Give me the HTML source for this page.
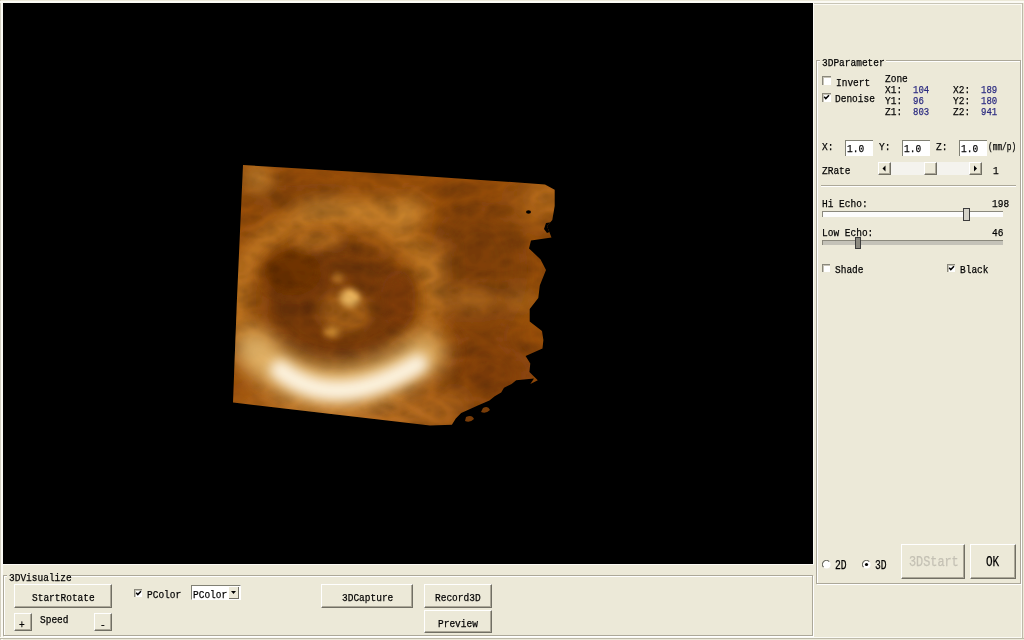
<!DOCTYPE html>
<html><head><meta charset="utf-8"><style>
html,body{margin:0;padding:0;width:1024px;height:640px;overflow:hidden;background:#ece9d8;position:relative}
.t{position:absolute;-webkit-text-stroke:0.25px currentColor;font-family:"Liberation Mono",monospace;font-size:11.5px;line-height:13px;white-space:pre;color:#000;transform:scaleX(0.826);transform-origin:0 0}
#view{position:absolute;left:3px;top:3px;width:810px;height:561px;background:#000}
.btn{position:absolute;box-sizing:border-box;background:#ece9d8;border-top:1px solid #fff;border-left:1px solid #fff;border-right:1px solid #716f64;border-bottom:1px solid #716f64;box-shadow:inset -1px -1px 0 #aca899}
.gb{position:absolute;border-top:1px solid #aca899;border-left:1px solid #aca899;border-right:1px solid #fff;border-bottom:1px solid #fff;box-shadow:inset 1px 1px 0 #fff, 1px 1px 0 #aca899}
.lbl{position:absolute;background:#ece9d8}
.cb{position:absolute;background:#fff;border-top:1px solid #808080;border-left:1px solid #808080;box-sizing:content-box;width:8px;height:8px}
.edit{position:absolute;background:#fff;border-top:1px solid #808074;border-left:1px solid #808074;}
.combo{position:absolute;background:#fff;border-top:1px solid #808074;border-left:1px solid #808074;border-right:1px solid #fff;border-bottom:1px solid #fff}
.cbtn{position:absolute;background:#ece9d8;border-right:1px solid #716f64;border-bottom:1px solid #716f64;box-sizing:content-box}
.track{position:absolute;background:#f4f3ee}
.thumb{position:absolute;border:1px solid #3c3c3c}
</style></head><body>
<div id="view"></div>
<svg id="vol" width="1024" height="640" style="position:absolute;left:0;top:0"><defs>
<clipPath id="vc"><path d="M243 165 L400 174.5 L545 184.4 L554.7 189.8 L554.7 206 L552.3 220 L547 226 L551.5 237.5 L531 240.6 L529 248.4 L540.6 259.4 L546 270 L539.8 285.6 L538.3 298 L529.7 309 L529.7 321.6 L542 331 L543.4 340 L542.5 348.4 L525.6 356 L530.3 363.4 L529.4 371.9 L535 377.5 L537.8 380.3 L530.3 384 L534 378.4 L516.2 380.3 L511.6 384 L504 387.8 L501.2 392.5 L494.7 396.2 L489.4 400.6 L478.4 405.3 L461.2 413.1 L455.8 418.6 L451.9 424.8 L430 425.6 L233 402.5 L236.9 300 Z"/></clipPath>
<filter id="b3" x="150" y="100" width="500" height="400" filterUnits="userSpaceOnUse"><feGaussianBlur stdDeviation="3"/></filter>
<filter id="b6" x="150" y="100" width="500" height="400" filterUnits="userSpaceOnUse"><feGaussianBlur stdDeviation="6"/></filter>
<filter id="b10" x="150" y="100" width="500" height="400" filterUnits="userSpaceOnUse"><feGaussianBlur stdDeviation="10"/></filter>
<filter id="b16" x="150" y="100" width="500" height="400" filterUnits="userSpaceOnUse"><feGaussianBlur stdDeviation="16"/></filter>
<filter id="tex" x="220" y="150" width="350" height="290" filterUnits="userSpaceOnUse"><feTurbulence type="turbulence" baseFrequency="0.03 0.05" numOctaves="4" seed="9" result="n"/><feColorMatrix in="n" type="matrix" values="-1.4 0 0 0 1.15  -1.4 0 0 0 1.15  -1.4 0 0 0 1.15  0 0 0 0 1" result="g"/><feGaussianBlur in="g" stdDeviation="1.2" result="g2"/><feComposite in="SourceGraphic" in2="g2" operator="arithmetic" k1="0.5" k2="0.62" k3="0" k4="0"/><feColorMatrix type="matrix" values="0.96 0 0 0 0  0 0.84 0 0 0  0 0 0.6 0 0  0 0 0 1 0"/></filter>
</defs>
<g clip-path="url(#vc)">
<g filter="url(#tex)">
<rect x="220" y="150" width="350" height="290" fill="rgb(150,82,14)"/>
<g filter="url(#b16)">
  <ellipse cx="478" cy="270" rx="50" ry="70" fill="rgb(125,66,8)"/>
  <ellipse cx="490" cy="375" rx="45" ry="30" fill="rgb(125,64,8)"/>
  <ellipse cx="545" cy="198" rx="18" ry="18" fill="rgb(205,140,55)"/>
  <ellipse cx="350" cy="412" rx="120" ry="16" fill="rgb(195,130,55)"/>
</g>
<g filter="url(#b10)">
  <ellipse cx="335" cy="300" rx="98" ry="85" stroke="rgb(195,132,50)" stroke-width="18" fill="none"/>
  <ellipse cx="295" cy="195" rx="45" ry="10" fill="rgb(122,64,8)"/>
  <ellipse cx="256" cy="176" rx="12" ry="10" fill="rgb(220,165,80)"/>
  <ellipse cx="338" cy="305" rx="74" ry="60" fill="rgb(118,60,8)"/>
  <ellipse cx="472" cy="300" rx="28" ry="9" fill="rgb(185,122,45)"/>
  <ellipse cx="410" cy="212" rx="16" ry="14" fill="rgb(205,145,60)"/>
  <path d="M300 214 Q370 198 420 215" stroke="rgb(210,155,70)" stroke-width="9" fill="none"/>
  <path d="M436 240 Q445 290 425 345" stroke="rgb(185,122,45)" stroke-width="12" fill="none"/>
  <ellipse cx="520" cy="300" rx="14" ry="10" fill="rgb(185,122,45)"/>
</g>
<g filter="url(#b6)">
  <ellipse cx="292" cy="272" rx="30" ry="24" fill="rgb(108,54,5)"/>
  <path d="M278 345 Q335 385 410 348" stroke="rgb(105,52,5)" stroke-width="14" fill="none"/>
  <ellipse cx="398" cy="300" rx="18" ry="30" fill="rgb(122,62,8)"/>
  <ellipse cx="345" cy="312" rx="26" ry="22" fill="rgb(160,98,30)"/>
  <ellipse cx="318" cy="240" rx="26" ry="9" fill="rgb(175,112,38)"/>
</g>
<g filter="url(#b3)">
  <ellipse cx="350" cy="298" rx="10" ry="9" fill="rgb(232,190,115)"/>
  <ellipse cx="332" cy="332" rx="8" ry="5" fill="rgb(205,148,65)"/>
  <ellipse cx="338" cy="278" rx="6" ry="5" fill="rgb(185,125,50)"/>
</g>
</g>
<g filter="url(#b10)" opacity="0.9">
  <path d="M255 350 Q325 420 426 354" stroke="rgb(230,185,110)" stroke-width="40" fill="none" stroke-linecap="round"/>
</g>
<g filter="url(#b6)" opacity="0.9">
  <path d="M280 370 Q335 414 418 364" stroke="rgb(255,250,238)" stroke-width="20" fill="none" stroke-linecap="round"/>
</g>
<ellipse cx="528.5" cy="212" rx="2.5" ry="1.8" fill="#000"/>
<path d="M546 223 L553 222 L552 231 L547 233 L544 229 Z" fill="#000"/>
</g>
<path d="M483 408 Q488 405 490 410 Q486 414 481 412 Z" fill="rgb(120,60,8)"/><path d="M466 417 Q472 414 474 419 Q470 423 465 421 Z" fill="rgb(120,60,8)"/>
</svg>
<div style="position:absolute;left:0px;top:0px;width:1px;height:640px;background:#d4d0c0"></div>
<div style="position:absolute;left:1px;top:1px;width:2px;height:639px;background:#fbfaf4"></div>
<div style="position:absolute;left:0px;top:1px;width:1024px;height:2px;background:#fbfaf4"></div>
<div style="position:absolute;left:814px;top:3px;width:209px;height:1px;background:#c8c5b6"></div>
<div style="position:absolute;left:814px;top:4px;width:208px;height:1px;background:#fbfaf4"></div>
<div style="position:absolute;left:813px;top:3px;width:1px;height:562px;background:#fbfaf4"></div>
<div style="position:absolute;left:3px;top:564px;width:811px;height:1px;background:#fbfaf4"></div>
<div style="position:absolute;left:1022px;top:3px;width:1px;height:636px;background:#bdbaa9"></div>
<div style="position:absolute;left:1021px;top:4px;width:1px;height:634px;background:#fbfaf4"></div>
<div style="position:absolute;left:0px;top:638px;width:1024px;height:1px;background:#bdbaa9"></div>
<div style="position:absolute;left:0px;top:637px;width:1022px;height:1px;background:#fbfaf4"></div>
<div style="position:absolute;left:4px;top:576px;width:808px;height:59px;border:1px solid #fff"></div>
<div style="position:absolute;left:3px;top:575px;width:808px;height:59px;border:1px solid #aca899"></div>
<div class="lbl" style="left:7px;top:570px;width:64px;height:10px"></div>
<div class="t" style="left:8.5px;top:570.54px;">3DVisualize</div>
<div class="btn" style="left:14px;top:584px;width:98px;height:24px"></div>
<div class="t" style="left:31.5px;top:591.14px;">StartRotate</div>
<div class="btn" style="left:14px;top:613px;width:18px;height:18px"></div>
<div class="t" style="left:19.0px;top:617.94px;">+</div>
<div class="btn" style="left:94px;top:613px;width:18px;height:18px"></div>
<div class="t" style="left:99.5px;top:617.94px;">-</div>
<div class="t" style="left:39.5px;top:613.14px;">Speed</div>
<svg style="position:absolute;left:134px;top:589px" width="8" height="8"><rect x="0" y="0" width="8" height="8" fill="#fff"/><rect x="0" y="0" width="8" height="1" fill="#8a887c"/><rect x="0" y="0" width="1" height="8" fill="#8a887c"/><rect x="1" y="1" width="7" height="1" fill="#c8c5b8"/><rect x="1" y="1" width="1" height="7" fill="#c8c5b8"/><path d="M2.2 3.8 L3.8 5.6 L7 2.2" stroke="#000" stroke-width="1.5" fill="none"/></svg>
<div class="t" style="left:146.5px;top:588.44px;">PColor</div>
<div class="combo" style="left:191px;top:585px;width:48px;height:13px"></div>
<div class="t" style="left:192.5px;top:588.24px;">PColor</div>
<div class="cbtn" style="left:229px;top:587px;width:9px;height:11px"><svg width="9" height="11" style="position:absolute;left:0;top:0"><path d="M2 4 L7 4 L4.5 7 Z" fill="#000"/></svg></div>
<div class="btn" style="left:321px;top:584px;width:92px;height:24px"></div>
<div class="t" style="left:341.5px;top:591.14px;">3DCapture</div>
<div class="btn" style="left:424px;top:584px;width:68px;height:24px"></div>
<div class="t" style="left:435.0px;top:591.14px;">Record3D</div>
<div class="btn" style="left:424px;top:610px;width:68px;height:23px"></div>
<div class="t" style="left:438.0px;top:616.94px;">Preview</div>
<div style="position:absolute;left:817px;top:61px;width:203px;height:522px;border:1px solid #fff"></div>
<div style="position:absolute;left:816px;top:60px;width:203px;height:522px;border:1px solid #aca899"></div>
<div class="lbl" style="left:820px;top:55px;width:66px;height:10px"></div>
<div class="t" style="left:821.5px;top:55.94px;">3DParameter</div>
<svg style="position:absolute;left:822px;top:76px" width="9" height="9"><rect x="0" y="0" width="9" height="9" fill="#fff"/><rect x="0" y="0" width="9" height="1" fill="#8a887c"/><rect x="0" y="0" width="1" height="9" fill="#8a887c"/><rect x="1" y="1" width="8" height="1" fill="#c8c5b8"/><rect x="1" y="1" width="1" height="8" fill="#c8c5b8"/></svg>
<div class="t" style="left:835.5px;top:75.54px;">Invert</div>
<svg style="position:absolute;left:822px;top:93px" width="9" height="9"><rect x="0" y="0" width="9" height="9" fill="#fff"/><rect x="0" y="0" width="9" height="1" fill="#8a887c"/><rect x="0" y="0" width="1" height="9" fill="#8a887c"/><rect x="1" y="1" width="8" height="1" fill="#c8c5b8"/><rect x="1" y="1" width="1" height="8" fill="#c8c5b8"/><path d="M2.2 3.8 L3.8 5.6 L7 2.2" stroke="#000" stroke-width="1.5" fill="none"/></svg>
<div class="t" style="left:835.0px;top:92.24px;">Denoise</div>
<div class="t" style="left:884.5px;top:72.44px;">Zone</div>
<div class="t" style="left:884.5px;top:82.54px;">X1:</div>
<div class="t" style="left:912.5px;top:82.54px;transform:scaleX(0.783);color:#2a2a80;">104</div>
<div class="t" style="left:952.5px;top:82.54px;">X2:</div>
<div class="t" style="left:980.7px;top:82.54px;transform:scaleX(0.783);color:#2a2a80;">189</div>
<div class="t" style="left:884.5px;top:94.04px;">Y1:</div>
<div class="t" style="left:912.5px;top:94.04px;transform:scaleX(0.783);color:#2a2a80;">96</div>
<div class="t" style="left:952.5px;top:94.04px;">Y2:</div>
<div class="t" style="left:980.7px;top:94.04px;transform:scaleX(0.783);color:#2a2a80;">180</div>
<div class="t" style="left:884.5px;top:105.44px;">Z1:</div>
<div class="t" style="left:912.5px;top:105.44px;transform:scaleX(0.783);color:#2a2a80;">803</div>
<div class="t" style="left:952.5px;top:105.44px;">Z2:</div>
<div class="t" style="left:980.7px;top:105.44px;transform:scaleX(0.783);color:#2a2a80;">941</div>
<div class="t" style="left:821.5px;top:139.64px;">X:</div>
<div class="t" style="left:878.5px;top:139.64px;">Y:</div>
<div class="t" style="left:935.5px;top:139.64px;">Z:</div>
<div class="edit" style="left:845px;top:140px;width:27px;height:15px"></div>
<div class="t" style="left:846.5px;top:141.64px;">1.0</div>
<div class="edit" style="left:902px;top:140px;width:27px;height:15px"></div>
<div class="t" style="left:903.5px;top:141.64px;">1.0</div>
<div class="edit" style="left:959px;top:140px;width:27px;height:15px"></div>
<div class="t" style="left:960.5px;top:141.64px;">1.0</div>
<div class="t" style="left:987.5px;top:139.64px;transform:scaleX(0.681);">(mm/p)</div>
<div class="t" style="left:821.5px;top:163.54px;">ZRate</div>
<div class="track" style="left:878px;top:162px;width:104px;height:13px"></div>
<div class="btn" style="left:878px;top:162px;width:13px;height:13px"></div>
<svg style="position:absolute;left:878px;top:162px" width="13" height="13"><path d="M7.5 3.5 L4.5 6.5 L7.5 9.5 Z" fill="#000"/></svg>
<div class="btn" style="left:969px;top:162px;width:13px;height:13px"></div>
<svg style="position:absolute;left:969px;top:162px" width="13" height="13"><path d="M5 3.5 L8 6.5 L5 9.5 Z" fill="#000"/></svg>
<div class="btn" style="left:924px;top:162px;width:13px;height:13px"></div>
<div class="t" style="left:992.5px;top:163.54px;">1</div>
<div style="position:absolute;left:821px;top:185px;width:195px;height:1px;background:#aca899"></div>
<div style="position:absolute;left:821px;top:186px;width:195px;height:1px;background:#fff"></div>
<div class="t" style="left:821.5px;top:197.34px;">Hi Echo:</div>
<div class="t" style="left:991.9px;top:197.34px;">198</div>
<div style="position:absolute;left:822px;top:211px;width:181px;height:1px;background:#8a887c"></div>
<div style="position:absolute;left:822px;top:212px;width:1px;height:5px;background:#8a887c"></div>
<div style="position:absolute;left:823px;top:212px;width:180px;height:5px;background:#fcfcfc"></div>
<div class="thumb" style="left:963px;top:208px;width:5px;height:11px;background:#d4d2c8"></div>
<div class="t" style="left:821.5px;top:225.84px;">Low Echo:</div>
<div class="t" style="left:992.3px;top:225.84px;">46</div>
<div style="position:absolute;left:822px;top:240px;width:181px;height:1px;background:#8a887c"></div>
<div style="position:absolute;left:822px;top:241px;width:1px;height:4px;background:#8a887c"></div>
<div style="position:absolute;left:823px;top:241px;width:180px;height:4px;background:#c4c2b8"></div>
<div class="thumb" style="left:855px;top:237px;width:4px;height:10px;background:#8c8a80"></div>
<svg style="position:absolute;left:822px;top:264px" width="8" height="8"><rect x="0" y="0" width="8" height="8" fill="#fff"/><rect x="0" y="0" width="8" height="1" fill="#8a887c"/><rect x="0" y="0" width="1" height="8" fill="#8a887c"/><rect x="1" y="1" width="7" height="1" fill="#c8c5b8"/><rect x="1" y="1" width="1" height="7" fill="#c8c5b8"/></svg>
<div class="t" style="left:835.3px;top:262.94px;">Shade</div>
<svg style="position:absolute;left:947px;top:264px" width="8" height="8"><rect x="0" y="0" width="8" height="8" fill="#fff"/><rect x="0" y="0" width="8" height="1" fill="#8a887c"/><rect x="0" y="0" width="1" height="8" fill="#8a887c"/><rect x="1" y="1" width="7" height="1" fill="#c8c5b8"/><rect x="1" y="1" width="1" height="7" fill="#c8c5b8"/><path d="M2.2 3.8 L3.8 5.6 L7 2.2" stroke="#000" stroke-width="1.5" fill="none"/></svg>
<div class="t" style="left:960.1px;top:262.94px;">Black</div>
<svg style="position:absolute;left:822px;top:559.5px" width="10" height="10"><circle cx="4.5" cy="4.5" r="4" fill="#fff"/><path d="M1.6 7.2 A3.7 3.7 0 0 1 7.2 1.6" stroke="#6a6a60" stroke-width="1.2" fill="none"/></svg>
<div class="t" style="left:835.1px;top:560.07px;font-size:12.5px;transform:scaleX(0.773);">2D</div>
<svg style="position:absolute;left:862px;top:559.5px" width="10" height="10"><circle cx="4.5" cy="4.5" r="4" fill="#fff"/><path d="M1.6 7.2 A3.7 3.7 0 0 1 7.2 1.6" stroke="#6a6a60" stroke-width="1.2" fill="none"/><circle cx="4.5" cy="4.5" r="1.6" fill="#000"/></svg>
<div class="t" style="left:875.1px;top:560.07px;font-size:12.5px;transform:scaleX(0.773);">3D</div>
<div class="btn" style="left:901px;top:544px;width:64px;height:35px"></div>
<div class="t" style="left:908.8px;top:556.27px;font-size:14px;transform:scaleX(0.845);color:#c4c1b4;">3DStart</div>
<div class="btn" style="left:970px;top:544px;width:46px;height:35px"></div>
<div class="t" style="left:986.3px;top:556.27px;font-size:14px;transform:scaleX(0.786);">OK</div>
</body></html>
